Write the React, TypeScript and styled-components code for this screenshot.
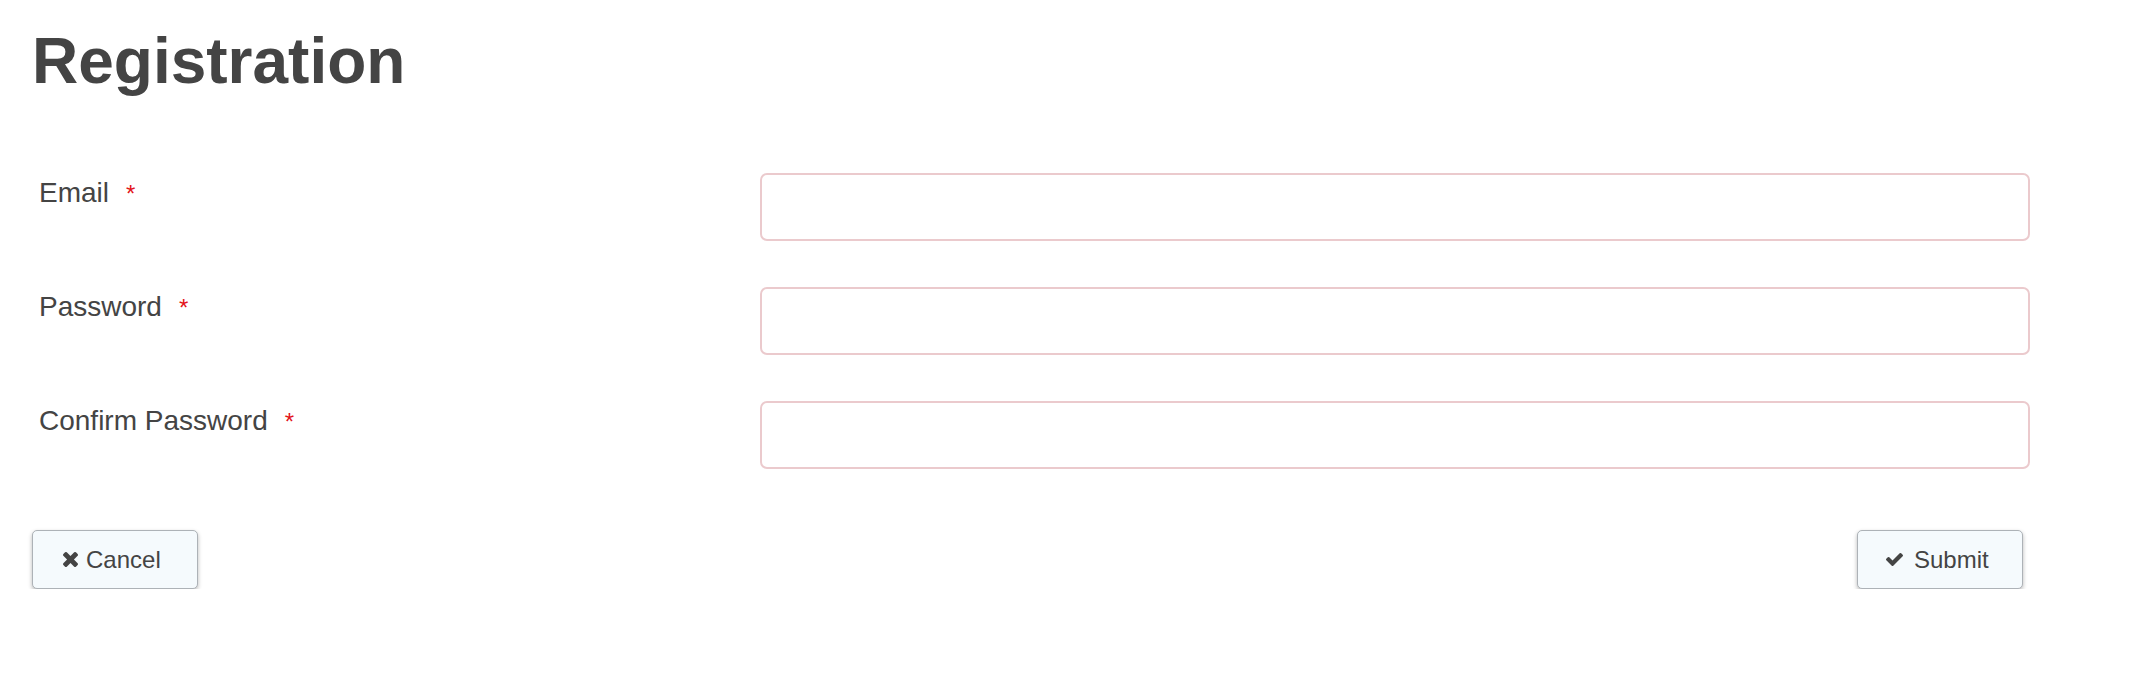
import React from 'react'
import styled, { createGlobalStyle } from 'styled-components'

const GlobalStyle = createGlobalStyle`
    body {
        margin: 0;
        background: #fff;
        font-family: "Liberation Sans", Arial, sans-serif;
        color: #444;
    }
`;
const Page = styled.div`
    width: 1998px;
    padding: 27px 0 0 32px;
`;
const Title = styled.h1`
    margin: 0;
    font-size: 64px;
    line-height: 69px;
    font-weight: bold;
    color: #444;
`;
const Form = styled.form`
    display: flex;
    flex-direction: column;
    gap: 46px;
    margin-top: 77px;
`;
const Row = styled.div`
    display: flex;
    align-items: flex-start;
`;
const Label = styled.label`
    width: 728px;
    flex-shrink: 0;
    box-sizing: border-box;
    padding-left: 7px;
    font-size: 28px;
    line-height: 40px;
    color: #444;
`;
const Required = styled.span`
    margin-left: 17px;
    color: #e3141b;
    font-size: 24px;
`;
const Input = styled.input`
    flex: 1;
    height: 68px;
    box-sizing: border-box;
    border: 2px solid #ebcacd;
    border-radius: 7px;
    background: #fff;
    outline: none;
    font-size: 24px;
    padding: 0 16px;
`;
const Actions = styled.div`
    display: flex;
    justify-content: space-between;
    margin-top: 61px;
    padding-right: 7px;
`;
const Button = styled.button<{ $primary?: boolean }>`
    display: flex;
    align-items: center;
    gap: ${p => (p.$primary ? '11px' : '8px')};
    width: 166px;
    height: 59px;
    box-sizing: border-box;
    padding: 0 0 0 ${p => (p.$primary ? '28px' : '30px')};
    border: 1px solid #adb2b7;
    border-radius: 5px;
    background: #f5fafd;
    box-shadow: 0 2px 4px rgba(0, 0, 0, 0.28);
    font-family: "Liberation Sans", Arial, sans-serif;
    font-size: 24px;
    color: #444;
    cursor: pointer;
    svg {
        fill: #444;
        flex-shrink: 0;
    }
`;

// font-awesome 4 glyphs, cropped to their ink
const TimesIcon = () => (
    <svg width='15' height='15' viewBox='110 366 1188 1188'>
        <path d='M1298 1322q0 40-28 68l-136 136q-28 28-68 28t-68-28l-294-294-294 294q-28 28-68 28t-68-28l-136-136q-28-28-28-68t28-68l294-294-294-294q-28-28-28-68t28-68l136-136q28-28 68-28t68 28l294 294 294-294q28-28 68-28t68 28l136 136q28 28 28 68t-28 68l-294 294 294 294q28 28 28 68z' />
    </svg>
)
const CheckIcon = () => (
    <svg width='17' height='13' viewBox='121 334 1550 1188'>
        <path d='M1671 566q0 40-28 68l-724 724-136 136q-28 28-68 28t-68-28l-136-136-362-362q-28-28-28-68t28-68l136-136q28-28 68-28t68 28l294 295 656-657q28-28 68-28t68 28l136 136q28 28 28 68z' />
    </svg>
)

const fields = ['Email', 'Password', 'Confirm Password']

const App = () => {
    return (
        <Page>
            <GlobalStyle />
            <Title>Registration</Title>
            <Form onSubmit={e => e.preventDefault()}>
                {fields.map(f => (
                    <Row key={f}>
                        <Label>
                            {f}
                            <Required>*</Required>
                        </Label>
                        <Input type={f === 'Email' ? 'email' : 'password'} />
                    </Row>
                ))}
            </Form>
            <Actions>
                <Button type='button'><TimesIcon />Cancel</Button>
                <Button type='submit' $primary><CheckIcon />Submit</Button>
            </Actions>
        </Page>
    )
}

export default App
